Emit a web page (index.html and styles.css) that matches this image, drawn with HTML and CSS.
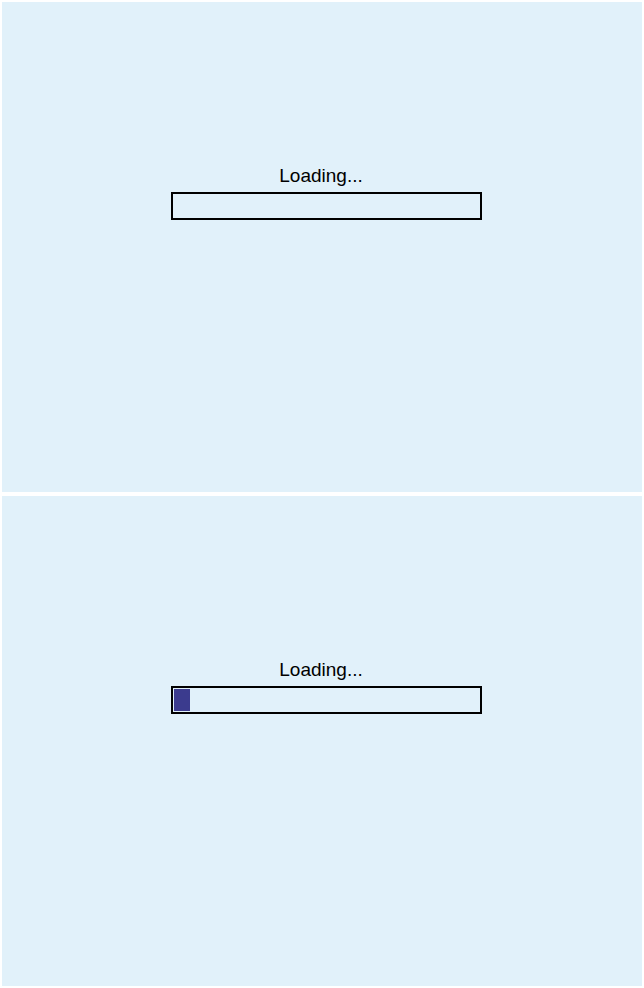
FILE: index.html
```html
<!DOCTYPE html>
<html>
<head>
<meta charset="utf-8">
<link rel="stylesheet" href="styles.css">
</head>
<body>
<div class="stack">
  <section class="panel">
    <div class="loader">
      <div class="label">Loading...</div>
      <div class="bar"><div class="fill" style="width:0px"></div></div>
    </div>
  </section>
  <section class="panel">
    <div class="loader">
      <div class="label">Loading...</div>
      <div class="bar"><div class="fill" style="width:16px"></div></div>
    </div>
  </section>
</div>
</body>
</html>
```
FILE: styles.css
```css
html, body {
  margin: 0;
  padding: 0;
  background: #ffffff;
}
body {
  padding: 2px;
  font-family: "Liberation Sans", Arial, sans-serif;
}
.stack {
  display: flex;
  flex-direction: column;
  gap: 4px;
}
.panel {
  height: 490px;
  width: 640px;
  background: #e1f1fa;
  box-sizing: border-box;
  padding-top: 163px;
}
.loader {
  display: flex;
  flex-direction: column;
  margin-left: 169px;
  width: 311px;
}
.label {
  font-size: 19px;
  line-height: 22px;
  color: #000;
  text-align: center;
  margin-left: -11px;
  margin-bottom: 5px;
}
.bar {
  box-sizing: border-box;
  height: 28px;
  border: 2px solid #000;
  padding: 1px;
  display: flex;
}
.fill {
  height: 22px;
  background: #3b3b8e;
}
```
